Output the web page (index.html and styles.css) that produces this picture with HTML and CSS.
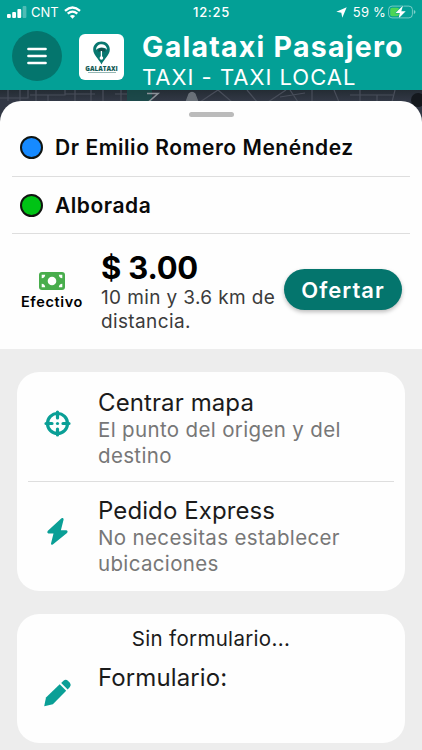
FILE: index.html
```html
<!DOCTYPE html>
<html lang="es">
<head>
<meta charset="utf-8">
<title>Galataxi Pasajero</title>
<link rel="stylesheet" href="styles.css">
</head>
<body>
<div class="app">
  <header class="header">
    <div class="status">
      <div class="status-left">
        <svg width="20" height="12" viewBox="0 0 20 12" fill="#fff"><rect x="0" y="8" width="3.8" height="4" rx="1"/><rect x="5.2" y="6" width="3.8" height="6" rx="1"/><rect x="10.4" y="3" width="3.8" height="9" rx="1"/><rect x="15.6" y="0" width="3.8" height="12" rx="1" opacity=".3"/></svg>
        <span class="carrier">CNT</span>
        <svg class="wifi" width="17" height="13" viewBox="0 0 17 13" fill="none" stroke="#fff" stroke-width="2.3"><path d="M1 4.8Q8.500-1.900 16 4.800M3.700 7.700Q8.500 3.500 13.300 7.700"/><path d="M5.900 10Q8.500 7.900 11.100 10L8.500 12.700Z" fill="#fff" stroke="none"/></svg>
      </div>
      <span class="time">12:25</span>
      <div class="status-right">
        <svg width="11" height="11" viewBox="0 0 11 11"><path d="M10.700.300 6.300 10.700 5.300 5.700.300 4.700Z" fill="#fff"/></svg>
        <span class="percent">59 %</span>
        <svg class="battery" width="28" height="14" viewBox="0 0 28 14"><rect x=".6" y="1.100" width="23.800" height="11.800" rx="3.500" fill="none" stroke="#fff" stroke-opacity=".45"/><rect x="2.200" y="2.700" width="9" height="8.600" rx="2" fill="#4cd556"/><path d="M25.800 5v4q1.700-.6 1.700-2T25.800 5Z" fill="#fff" fill-opacity=".5"/><path d="M15 .5 7.500 8h4.300L10.500 13.500 17.700 6.200h-4.400Z" fill="#fff" stroke="#08a096" stroke-width="1" paint-order="stroke"/></svg>
      </div>
    </div>
    <div class="titlebar">
      <button class="menu" aria-label="Menú"><svg width="20" height="18" viewBox="0 0 20 18" stroke="#fff" stroke-width="2.500" stroke-linecap="round"><path d="M1.400 2h17.200M1.400 9h17.200M1.400 16h17.200"/></svg></button>
      <div class="logo">
        <svg width="20" height="24" viewBox="0 0 20 24"><path d="M9.500.5C4.700.5 1.200 4 1.200 8.500c0 5.500 5.300 9 8.300 15 3-6 8.300-9.500 8.300-15C17.800 4 14.300.5 9.500.5Z" fill="#08776f"/><path d="M4 9c.2-4 3-6 6-5.700 3.200.2 5 2.400 5 5.700-.7-1-1.300-1.700-2.500-2-2-.7-4-.7-6 .2C5.300 7.700 4.600 8.300 4 9Z" fill="#fff"/><path d="M6.600 8.200q3-2.200 6.300 0l.6 2.400h-7.500Z" fill="#124f4c"/><path d="M9.400 10v7" stroke="#fff" stroke-width="1.300"/><circle cx="9.400" cy="17" r="1.800" fill="#fff"/></svg>
        <span class="brand">GALATAXI</span>
        <span class="tagline"></span>
      </div>
      <div class="titles">
        <h1>Galataxi Pasajero</h1>
        <p>TAXI - TAXI LOCAL</p>
      </div>
    </div>
  </header>
  <div class="map">
    <svg width="422" height="40" viewBox="0 0 422 40" fill="none" stroke="#484e5a" stroke-width="1.200"><path d="M0 8h28V0M8 0v11M20 0v14M30 5h35V0M36 0v12M48 5v7M65 4h30M75 0v12M91 0v12M103 0v12M115 4h12M121 0v12M200 12l18-12M218 0l14 12M247 0l10 12M268 12l18-12M280 7l25-4M290 0l8 12M312 0v12M334 0l5 12M350 5h43M360 0v12M377 5v7M395 0l-3 12"/><rect x="127" y="0" width="25" height="12" fill="#12534f" stroke="none" opacity=".65"/><path d="M147 3.500h11l-9 8" stroke="#8a9097" stroke-width="1.600"/><path d="M186 12l3-8q3-3 6 0l3 8" fill="#697078" stroke="#697078"/><circle cx="418" cy="10" r="7" fill="#14181d" stroke="none"/></svg>
  </div>
  <section class="sheet">
    <div class="grabber"></div>
    <div class="place origin"><i class="dot blue"></i><span class="street">Dr Emilio Romero Menéndez</span></div>
    <div class="place"><i class="dot green"></i><span class="area">Alborada</span></div>
    <div class="fare">
      <div class="payment">
        <svg width="26" height="18" viewBox="0 0 26 18"><rect width="26" height="18" rx="3" fill="#48ad4c"/><circle cx="13" cy="9" r="4.300" fill="#fff"/><path d="M2.700 2.700h3.500q-.3 3.200-3.500 3.500ZM23.300 2.700h-3.500q.3 3.200 3.500 3.500ZM2.700 15.300v-3.500q3.200.3 3.500 3.500ZM23.300 15.300v-3.500q-3.200.3-3.500 3.500Z" fill="#fff"/></svg>
        <span>Efectivo</span>
      </div>
      <div class="quote"><strong>$ 3.00</strong><p>10 min y 3.6 km de<br>distancia.</p></div>
      <button class="offer">Ofertar</button>
    </div>
  </section>
  <main class="options">
    <section class="card">
      <div class="option">
        <svg class="icon" width="28" height="28" viewBox="0 0 28 28" fill="none" stroke="#0a9f96" stroke-width="3.200" stroke-linecap="round"><circle cx="13.500" cy="13.500" r="10"/><path d="M13.500 2v6M13.500 19v6M2 13.500h6M19 13.500h6"/><circle cx="13.500" cy="13.500" r="1.600" fill="#0a9f96" stroke="none"/></svg>
        <div><h2>Centrar mapa</h2><p>El punto del origen y del<br>destino</p></div>
      </div>
      <div class="option express">
        <svg class="icon" width="28" height="28" viewBox="0 0 28 28"><path d="M18.700 0Q19.900.500 19.500 2L16.900 12.300h5.500q2 .800.600 2.700L8.800 26.500Q7 27.500 7 25.500L9.500 15.500H4.500q-2-.700-.6-2.700L17.200.500Q18-.2 18.700 0Z" fill="#0a9f96"/></svg>
        <div><h2>Pedido Express</h2><p>No necesitas establecer<br>ubicaciones</p></div>
      </div>
    </section>
    <section class="card form">
      <p class="empty">Sin formulario...</p>
      <div class="form-row">
        <svg class="icon" width="28" height="28" viewBox="0 0 28 28" fill="#0a9f96"><path d="M.2 27.200 2 18.500 15.700 5.200l6.500 6.500L8.900 25.300Z"/><path d="m17.200 3.900 2.300-2.200q2.200-1.700 4.400 0l2 2q1.700 2.200 0 4.400l-2.200 2.300Z"/></svg>
        <h2>Formulario:</h2>
      </div>
    </section>
  </main>
</div>
</body>
</html>
```
FILE: styles.css
```css
* { box-sizing: border-box; }
body { margin: 0; font-family: Inter, sans-serif; background: #ededed; color: #111; }
h1, h2, p { margin: 0; font-weight: 400; }
h1, h2, p, span, strong { white-space: nowrap; }
svg { display: block; flex: none; }
button { border: 0; padding: 0; font-family: inherit; }
.app { width: 422px; height: 750px; overflow: hidden; display: flex; flex-direction: column; }
.header { height: 90px; flex: none; background: #03a096; color: #fff; }
.status { height: 24px; display: grid; grid-template-columns: 1fr auto 1fr; align-items: center; padding: 0 6px 0 7px; }
.status-left, .status-right { display: flex; align-items: center; }
.status-right { justify-content: flex-end; }
.carrier { margin-left: 4px; font-size: 13px; }
.wifi { margin-left: 5px; }
.time { font-size: 13px; font-weight: 500; letter-spacing: .7px; }
.percent { margin-left: 6px; font-size: 13px; letter-spacing: .2px; }
.battery { margin-left: 2px; }
.titlebar { height: 66px; display: flex; padding: 7px 0 0 12px; }
.menu { width: 50px; height: 50px; flex: none; border-radius: 50%; background: #04756d; display: flex; align-items: center; justify-content: center; }
.logo { width: 45px; height: 46px; flex: none; margin: 3px 0 0 17px; padding-top: 7px; background: #fff; border-radius: 6px; display: flex; flex-direction: column; align-items: center; }
.brand { font: 800 6.3px/7px "Open Sans", sans-serif; color: #145b56; }
.tagline { width: 28px; height: 1px; background: #97b7b4; }
.titles { margin-left: 18px; }
h1 { font-size: 28.500px; line-height: 32px; font-weight: 700; letter-spacing: 1.250px; }
.titles p { font-size: 22px; line-height: 29px; letter-spacing: 1px; }
.map { height: 40px; flex: none; background: linear-gradient(#242c34, #323845 11px); }
.sheet { height: 248px; flex: none; margin-top: -29px; background: #fefefe; border-radius: 21px 21px 0 0; padding: 11px 12px 0; }
.grabber { width: 45px; height: 5px; border-radius: 3px; background: #bbb; margin: 0 auto; }
.place { height: 57px; padding-left: 8px; display: flex; align-items: center; border-bottom: 1px solid #dedede; color: #0a0a0a; font-size: 21px; font-weight: 600; letter-spacing: .530px; }
.origin { height: 60px; padding-top: 2px; }
.dot { width: 23px; height: 23px; border: 2px solid #101410; border-radius: 50%; margin-right: 12px; }
.blue { background: #168aff; }
.green { background: #00c315; }
.fare { display: flex; }
.payment { width: 80px; padding-top: 38px; display: flex; flex-direction: column; align-items: center; }
.payment span { font-size: 14.500px; line-height: 24px; font-weight: 600; letter-spacing: .640px; color: #000; }
.quote { width: 183px; margin-left: 9px; padding-top: 15px; }
.quote strong { display: block; font-size: 31px; line-height: 37px; letter-spacing: -.2px; color: #000; }
.quote p { font-size: 19px; line-height: 23.500px; letter-spacing: .370px; color: #3b3b3b; }
.offer { width: 118px; height: 41px; margin-top: 35px; border-radius: 21px; background: #04756d; color: #fff; font-size: 22px; font-weight: 600; letter-spacing: 1px; box-shadow: 0 2px 4px #0004; }
.options { flex: 1; padding: 23px 17px 0; }
.card { height: 219px; background: #fefefe; border-radius: 22px; padding: 0 11px; }
.option { height: 110px; display: flex; align-items: flex-start; padding-top: 17px; border-bottom: 1px solid #dedede; }
.option.express { border: 0; padding-top: 15px; }
.icon { margin-left: 16px; margin-right: 26px; }
.option .icon { margin-top: 21px; }
h2 { font-size: 24px; line-height: 28px; letter-spacing: .1px; color: #1b1b1b; }
.option p { font-size: 20.500px; line-height: 26px; letter-spacing: .350px; color: #777; }
.form { height: 129px; margin-top: 23px; padding-top: 11px; }
.empty { text-align: center; font-size: 20.500px; line-height: 28px; letter-spacing: .320px; color: #1b1b1b; }
.form-row { display: flex; margin-top: 11px; }
.form-row .icon { margin-top: 15px; }
```
